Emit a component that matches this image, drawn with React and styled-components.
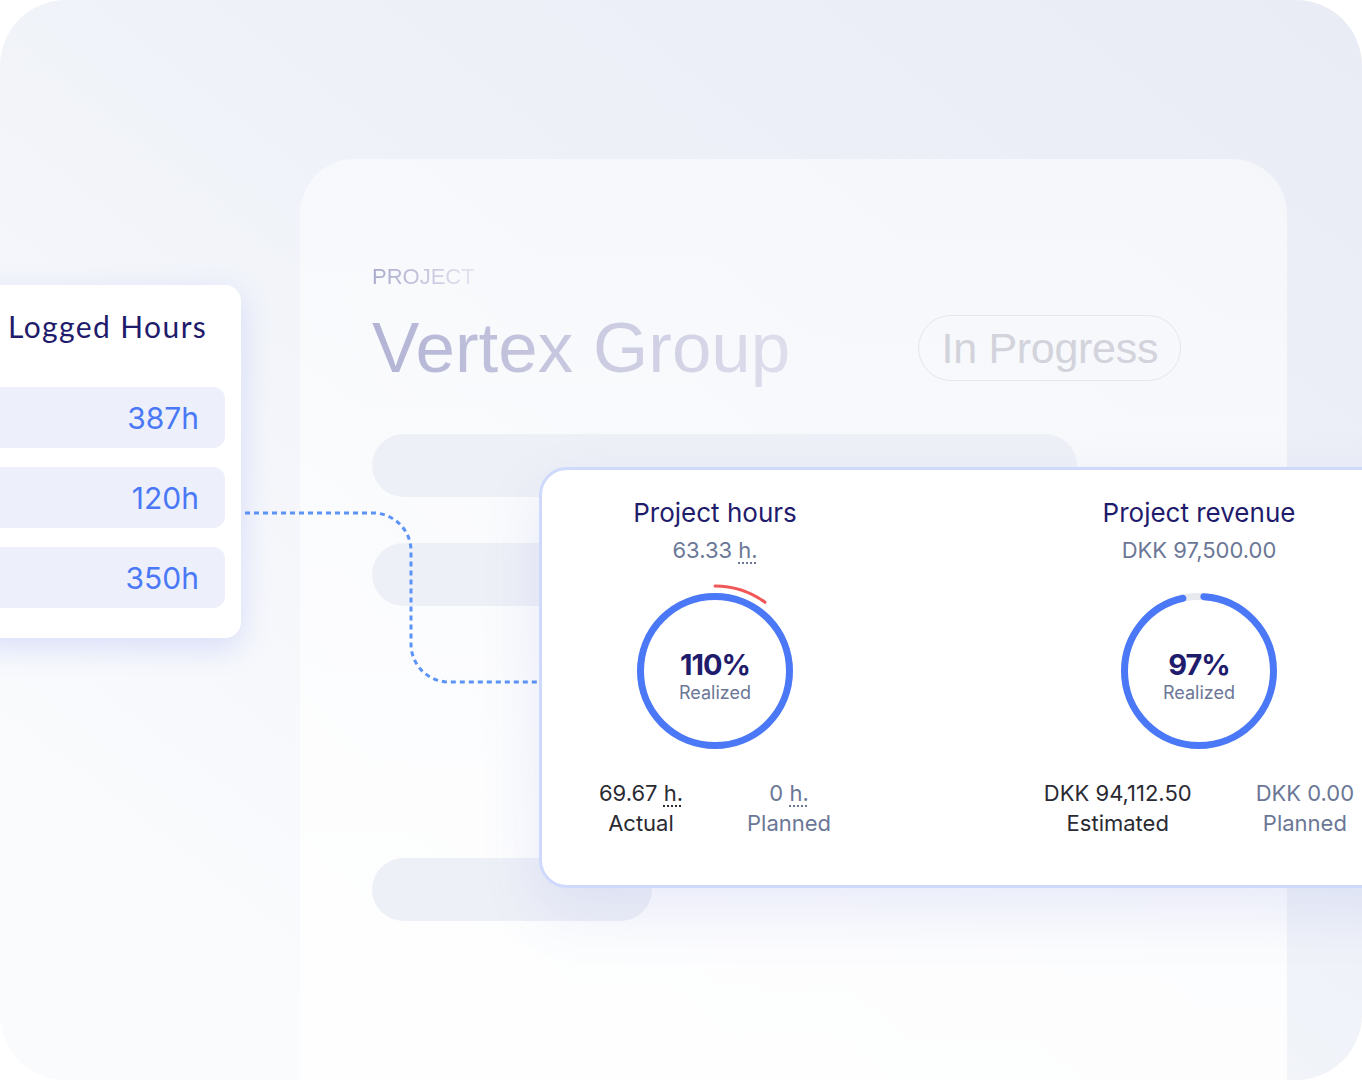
import React from "react";
import styled, { createGlobalStyle } from "styled-components";

const GlobalStyle = createGlobalStyle`
  html, body { margin: 0; padding: 0; background: #ffffff; }
  * { box-sizing: border-box; }
`;

const NAVY = "#1f1c6c";
const MUTED = "#6b7796";
const BLUE = "#4a78f6";

const Stage = styled.div`
  position: relative;
  width: 1362px;
  height: 1080px;
  overflow: hidden;
  border-radius: 66px;
  background: linear-gradient(to bottom left, #e9ecf5 0%, #eef1f8 40%, #fafbfd 85%);
  padding: 159px 75px 0 300px;
  font-family: Inter, "Liberation Sans", sans-serif;
`;

const ProjectCard = styled.section`
  height: 100%;
  border-radius: 55px 55px 0 0;
  background: linear-gradient(to bottom, rgba(255, 255, 255, 0.5) 0%, rgba(255, 255, 255, 0.7) 60%, rgba(255, 255, 255, 0.85) 100%);
  padding: 105px 0 0 72px;
  display: flex;
  flex-direction: column;
`;

const Eyebrow = styled.div`
  font-family: "Liberation Sans", Arial, sans-serif;
  font-size: 22px;
  line-height: 26px;
  background: linear-gradient(to right, #a7a8cb 0%, #e4e4f0 100%);
  -webkit-background-clip: text;
  background-clip: text;
  color: transparent;
  width: fit-content;
`;

const TitleRow = styled.div`
  margin-top: 18px;
  display: flex;
  align-items: center;
  gap: 128px;
`;

const Title = styled.h1`
  margin: 0;
  font-family: "Liberation Sans", Arial, sans-serif;
  font-weight: 400;
  font-size: 71px;
  line-height: 80px;
  background: linear-gradient(to right, #b3b4d5 0%, #c9c9e0 50%, #dedeed 100%);
  -webkit-background-clip: text;
  background-clip: text;
  color: transparent;
`;

const StatusPill = styled.span`
  height: 66px;
  width: 263px;
  display: flex;
  align-items: center;
  justify-content: center;
  border: 1.5px solid #e6e6ee;
  border-radius: 33px;
  font-family: "Liberation Sans", Arial, sans-serif;
  font-size: 43px;
  letter-spacing: -0.3px;
  color: #d3d3dc;
`;

const SkeletonBar = styled.div`
  height: 63px;
  width: ${(p) => p.$w}px;
  margin-top: ${(p) => p.$mt}px;
  border-radius: 32px;
  background: #eef0f7;
`;

const LoggedCard = styled.aside`
  position: absolute;
  left: -30px;
  top: 285px;
  width: 271px;
  height: 353px;
  background: #ffffff;
  border-radius: 16px;
  box-shadow: 0 10px 30px rgba(96, 118, 240, 0.2);
  padding: 0 16px 0 0;
  display: flex;
  flex-direction: column;
`;

const LoggedTitle = styled.h2`
  margin: 21px 0 0 38px;
  font-family: Lato, "Open Sans", sans-serif;
  font-weight: 400;
  font-size: 30px;
  letter-spacing: 1.4px;
  line-height: 40px;
  color: ${NAVY};
  white-space: nowrap;
`;

const HourList = styled.div`
  margin-top: 41px;
  display: flex;
  flex-direction: column;
  gap: 19px;
`;

const HourRow = styled.div`
  height: 61px;
  border-radius: 12px;
  background: #edf0fa;
  display: flex;
  align-items: center;
  justify-content: flex-end;
  padding-right: 26px;
  font-family: Inter, sans-serif;
  font-size: 30px;
  color: ${BLUE};
`;

const Connector = styled.svg`
  position: absolute;
  left: 240px;
  top: 505px;
  overflow: visible;
`;

const StatsCard = styled.div`
  position: absolute;
  left: 539px;
  top: 467px;
  width: 900px;
  height: 421px;
  background: #ffffff;
  border: 3px solid #cfd9fc;
  border-radius: 28px;
  box-shadow: 0 24px 60px rgba(90, 110, 210, 0.12);
  padding: 27px 0 0 0;
  display: grid;
  grid-template-columns: 346px 346px;
  column-gap: 138px;
  align-items: start;
`;

const Metric = styled.div`
  display: flex;
  flex-direction: column;
  align-items: center;
  text-align: center;
`;

const MetricTitle = styled.div`
  font-size: 26px;
  line-height: 32px;
  color: ${NAVY};
  white-space: nowrap;
`;

const MetricTotal = styled.div`
  margin-top: 7px;
  font-size: 22px;
  line-height: 28px;
  color: ${MUTED};
  white-space: nowrap;
`;

const Unit = styled.span`
  text-decoration: underline dotted;
  text-decoration-thickness: 2px;
  text-underline-offset: 4px;
`;

const RingWrap = styled.div`
  position: relative;
  margin-top: 17px;
  width: 180px;
  height: 180px;
`;

const RingLabel = styled.div`
  position: absolute;
  inset: 0;
  display: flex;
  flex-direction: column;
  align-items: center;
  justify-content: center;
  padding-top: 11px;
`;

const Percent = styled.div`
  font-size: 29px;
  line-height: 32px;
  font-weight: 700;
  letter-spacing: -1px;
  color: ${NAVY};
`;

const RingCaption = styled.div`
  font-size: 18px;
  line-height: 24px;
  color: ${MUTED};
`;

const Breakdown = styled.div`
  margin-top: 17px;
  display: flex;
  gap: 64px;
  justify-content: center;
  white-space: nowrap;
`;

const BreakItem = styled.div`
  display: flex;
  flex-direction: column;
  align-items: center;
  font-size: 22px;
  line-height: 30px;
  color: ${(p) => (p.$muted ? MUTED : "#2a2a33")};
`;

const R = 74.5;
const C = 2 * Math.PI * R;

function Ring({ pct }) {
  const shown = Math.min(pct, 100);
  const over = Math.max(pct - 100, 0);
  const partial = shown < 100;
  const dash = (C * shown) / 100 - (partial ? 8 : 0);
  const rOver = 85;
  const cOver = 2 * Math.PI * rOver;
  return (
    <svg width="180" height="180" viewBox="0 0 180 180">
      <g transform="rotate(-90 90 90)">
        <circle cx="90" cy="90" r={R} fill="none" stroke="#e7e9ef" strokeWidth="7" />
        <circle
          cx="90"
          cy="90"
          r={R}
          fill="none"
          stroke={BLUE}
          strokeWidth="7"
          strokeLinecap={partial ? "round" : "butt"}
          strokeDasharray={`${dash} ${C}`}
          strokeDashoffset={partial ? -5 : 0}
        />
        {over > 0 && (
          <circle
            cx="90"
            cy="90"
            r={rOver}
            fill="none"
            stroke="#f25757"
            strokeWidth="3"
            strokeLinecap="round"
            strokeDasharray={`${(cOver * over) / 100} ${cOver}`}
          />
        )}
      </g>
    </svg>
  );
}

function MetricColumn({ title, total, pct, items }) {
  return (
    <Metric>
      <MetricTitle>{title}</MetricTitle>
      <MetricTotal>{total}</MetricTotal>
      <RingWrap>
        <Ring pct={pct} />
        <RingLabel>
          <Percent>{pct}%</Percent>
          <RingCaption>Realized</RingCaption>
        </RingLabel>
      </RingWrap>
      <Breakdown>
        {items.map((it) => (
          <BreakItem key={it.label} $muted={it.muted}>
            <span>{it.value}</span>
            <span>{it.label}</span>
          </BreakItem>
        ))}
      </Breakdown>
    </Metric>
  );
}

const hours = ["387h", "120h", "350h"];

export default function App() {
  return (
    <>
      <GlobalStyle />
      <Stage>
        <ProjectCard>
          <Eyebrow>PROJECT</Eyebrow>
          <TitleRow>
            <Title>Vertex Group</Title>
            <StatusPill>In Progress</StatusPill>
          </TitleRow>
          <SkeletonBar $w={705} $mt={46} />
          <SkeletonBar $w={560} $mt={46} />
          <SkeletonBar $w={280} $mt={252} />
        </ProjectCard>

        <Connector width="305" height="185" viewBox="0 0 305 185">
          <path
            d="M5 8 H133 A38 38 0 0 1 171 46 V139 A38 38 0 0 0 209 177 H300"
            fill="none"
            stroke="#5b93f6"
            strokeWidth="3"
            strokeDasharray="5 4"
          />
        </Connector>

        <LoggedCard>
          <LoggedTitle>Logged Hours</LoggedTitle>
          <HourList>
            {hours.map((h) => (
              <HourRow key={h}>{h}</HourRow>
            ))}
          </HourList>
        </LoggedCard>

        <StatsCard>
          <MetricColumn
            title="Project hours"
            total={<>63.33 <Unit>h.</Unit></>}
            pct={110}
            items={[
              { value: <>69.67 <Unit>h.</Unit></>, label: "Actual" },
              { value: <>0 <Unit>h.</Unit></>, label: "Planned", muted: true },
            ]}
          />
          <MetricColumn
            title="Project revenue"
            total="DKK 97,500.00"
            pct={97}
            items={[
              { value: "DKK 94,112.50", label: "Estimated" },
              { value: "DKK 0.00", label: "Planned", muted: true },
            ]}
          />
        </StatsCard>
      </Stage>
    </>
  );
}
